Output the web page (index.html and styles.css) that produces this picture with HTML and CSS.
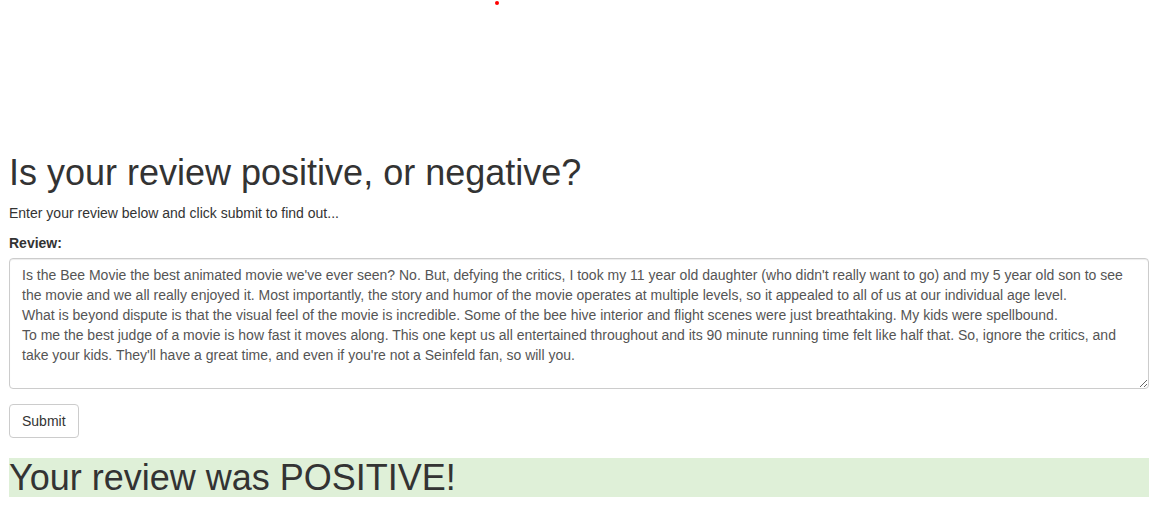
FILE: index.html
```html
<!DOCTYPE html>
<html lang="en">
<head>
<meta charset="utf-8">
<title>Review sentiment</title>
<link rel="stylesheet" href="styles.css">
</head>
<body>
<div class="container">
  <div class="banner"><span class="dot"></span></div>
  <h1 class="title">Is your review positive, or negative?</h1>
  <p class="lead-text">Enter your review below and click submit to find out...</p>
  <form class="review-form">
    <div class="form-group">
      <label class="label" for="review">Review:</label>
      <textarea id="review" class="form-control" spellcheck="false">Is the Bee Movie the best animated movie we've ever seen? No. But, defying the critics, I took my 11 year old daughter (who didn't really want to go) and my 5 year old son to see the movie and we all really enjoyed it. Most importantly, the story and humor of the movie operates at multiple levels, so it appealed to all of us at our individual age level.
What is beyond dispute is that the visual feel of the movie is incredible. Some of the bee hive interior and flight scenes were just breathtaking. My kids were spellbound.
To me the best judge of a movie is how fast it moves along. This one kept us all entertained throughout and its 90 minute running time felt like half that. So, ignore the critics, and take your kids. They'll have a great time, and even if you're not a Seinfeld fan, so will you.</textarea>
    </div>
    <button type="button" class="btn">Submit</button>
  </form>
  <h1 class="result">Your review was POSITIVE!</h1>
</div>
</body>
</html>
```

FILE: styles.css
```css
* { box-sizing: border-box; }
html, body { margin: 0; padding: 0; background: #fff; }
body {
  font-family: "Liberation Sans", Arial, sans-serif;
  font-size: 14px;
  line-height: 1.42857143;
  color: #333;
}
.container {
  padding: 0 11px 0 9px;
}
.banner {
  height: 133px;
  padding-top: 1px;
  padding-left: 486px;
}
.dot {
  display: block;
  width: 4px;
  height: 4px;
  border-radius: 50%;
  background: #f00;
}
.title, .result {
  font-family: inherit;
  font-weight: 500;
  font-size: 36px;
  line-height: 1.1;
  color: #333;
  margin: 20px 0 10px;
}
.lead-text {
  margin: 0 0 10px;
}
.review-form { margin: 0; }
.form-group {
  margin-bottom: 15px;
}
.label {
  display: inline-block;
  max-width: 100%;
  margin-bottom: 5px;
  font-weight: 700;
}
.form-control {
  display: block;
  width: 100%;
  height: 131px;
  padding: 6px 12px;
  font-family: inherit;
  font-size: 14px;
  line-height: 1.42857143;
  color: #555;
  background: #fff;
  border: 1px solid #ccc;
  border-radius: 4px;
  box-shadow: inset 0 1px 1px rgba(0,0,0,.075);
  resize: vertical;
  margin: 0;
  overflow: auto;
}
.btn {
  display: inline-block;
  margin: 0;
  padding: 6px 12px;
  font-family: inherit;
  font-size: 14px;
  line-height: 1.42857143;
  color: #333;
  background: #fff;
  border: 1px solid #ccc;
  border-radius: 4px;
  cursor: pointer;
}
.result {
  background-color: #dff0d8;
}
```
